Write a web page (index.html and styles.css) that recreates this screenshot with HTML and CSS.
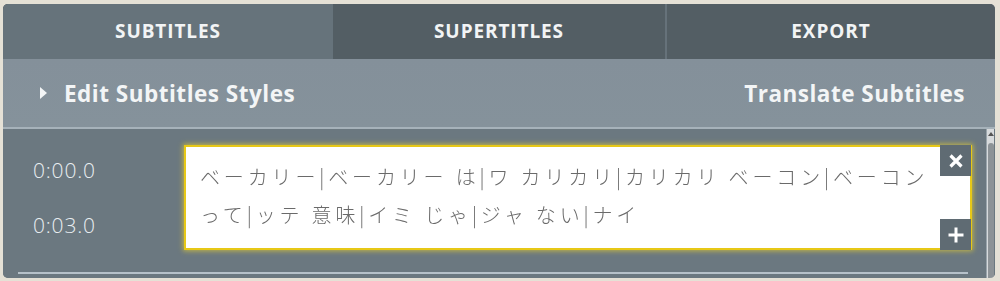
FILE: index.html
```html
<!DOCTYPE html>
<html lang="ja">
<head>
<meta charset="utf-8">
<link rel="stylesheet" href="styles.css">
</head>
<body>
<div class="panel">
  <div class="tabs">
    <div class="tab tab-active">SUBTITLES</div>
    <div class="tab">SUPERTITLES</div>
    <div class="tab tab-last">EXPORT</div>
  </div>
  <div class="toolbar">
    <div class="tool-left"><span class="tri"></span>Edit Subtitles Styles</div>
    <div class="tool-right">Translate Subtitles</div>
  </div>
  <div class="content">
    <div class="list">
      <div class="row">
        <div class="times">
          <div class="time">0:00.0</div>
          <div class="time">0:03.0</div>
        </div>
        <div class="box">
          <div class="text">ベーカリー|ベーカリー は|ワ カリカリ|カリカリ ベーコン|ベーコン って|ッテ 意味|イミ じゃ|ジャ ない|ナイ</div>
          <div class="btns">
            <div class="btn">
              <svg width="16" height="16" viewBox="0 0 16 16"><path d="M2.5 2.5 L13.5 13.5 M13.5 2.5 L2.5 13.5" stroke="#fff" stroke-width="3.2"/></svg>
            </div>
            <div class="btn">
              <svg width="18" height="18" viewBox="0 0 18 18"><path d="M9 1.5 V16.5 M1.5 9 H16.5" stroke="#fff" stroke-width="3"/></svg>
            </div>
          </div>
        </div>
      </div>
      <div class="sep"></div>
    </div>
    <div class="scroll">
      <div class="arrow"></div>
      <div class="thumb"></div>
    </div>
  </div>
</div>
</body>
</html>
```
FILE: styles.css
```css
html, body {
  margin: 0;
  padding: 0;
  background: #e5e1d6;
}
body {
  padding: 4px 5px 3px 3px;
  height: 281px;
  box-sizing: border-box;
}
.panel {
  height: 274px;
  border-radius: 5px;
  overflow: hidden;
  background: #6b7880;
  display: flex;
  flex-direction: column;
  font-family: "Open Sans", "Liberation Sans", sans-serif;
}
.tabs {
  height: 55px;
  display: grid;
  grid-template-columns: 330px 332px 1fr;
  background: #535e64;
}
.tab {
  display: flex;
  align-items: center;
  justify-content: center;
  color: #f2f4f5;
  font-weight: 700;
  font-size: 19px;
  letter-spacing: 0.9px;
  padding-bottom: 2px;
}
.tab-active {
  background: #66737b;
}
.tab-last {
  border-left: 2px solid #66727a;
}
.toolbar {
  height: 68px;
  background: linear-gradient(#84909a, #85929b);
  border-bottom: 2px solid #a6b2ba;
  display: flex;
  align-items: center;
  justify-content: space-between;
  padding: 0 30px 0 37px;
  color: #f3f5f6;
  font-weight: 700;
  font-size: 22.5px;
  letter-spacing: 0.5px;
}
.tool-left {
  display: flex;
  align-items: center;
}
.tri {
  width: 0;
  height: 0;
  border-top: 6px solid transparent;
  border-bottom: 6px solid transparent;
  border-left: 7px solid #f3f5f6;
  margin-right: 17px;
}
.content {
  flex: 1;
  display: flex;
  background: #6b7880;
}
.list {
  flex: 1;
  padding: 16px 14px 0 15px;
  display: flex;
  flex-direction: column;
}
.row {
  display: flex;
  align-items: flex-start;
}
.times {
  width: 166px;
  flex-shrink: 0;
  padding-left: 15px;
  box-sizing: border-box;
  padding-top: 12px;
  display: flex;
  flex-direction: column;
  gap: 29px;
}
.time {
  color: #e9eef1;
  font-size: 21px;
  font-weight: 300;
  line-height: 26px;
  letter-spacing: 0.8px;
}
.box {
  flex: 1;
  height: 101px;
  background: #fff;
  border: 2px solid #e7c817;
  box-shadow: 0 0 5px 1px rgba(240, 215, 40, 0.65);
  display: flex;
  justify-content: space-between;
}
.text {
  padding: 11px 0 0 14px;
  width: 740px;
  font-family: "Noto Sans CJK JP", sans-serif;
  font-weight: 300;
  font-size: 20px;
  line-height: 38px;
  color: #6a6a6a;
  letter-spacing: 3.85px;
  will-change: transform;
}
.btns {
  display: flex;
  flex-direction: column;
  justify-content: space-between;
  margin: -2px -1px -2px 0;
}
.btn {
  width: 31px;
  height: 31px;
  background: #5f6b73;
  display: flex;
  align-items: center;
  justify-content: center;
}
.sep {
  margin-top: 22px;
  height: 2px;
  background: #b6c1c9;
  width: 950px;
}
.scroll {
  width: 10px;
  margin-right: 1px;
  background: #d7dadc;
  border-left: 1px solid #9aa5ac;
  display: flex;
  flex-direction: column;
  align-items: center;
}
.arrow {
  margin-top: 3px;
  width: 0;
  height: 0;
  border-left: 3px solid transparent;
  border-right: 3px solid transparent;
  border-bottom: 4px solid #555;
}
.thumb {
  margin-top: 7px;
  width: 6px;
  flex: 1;
  border-radius: 3px 3px 0 0;
  background: #8d9397;
}
```
